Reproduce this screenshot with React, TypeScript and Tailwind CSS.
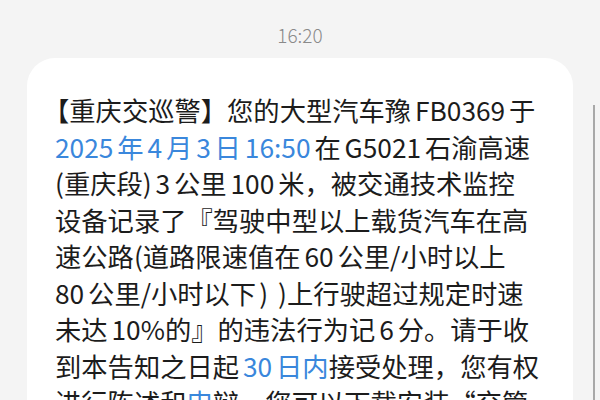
import React from 'react';

const Blue = ({ children }: { children: React.ReactNode }) => (
  <span className="text-[#3a87dc]">{children}</span>
);

export default function App() {
  const lines: React.ReactNode[] = [
    <>
      <span className="-ml-[12px]">【</span>重庆交巡警】您的大型汽车豫 FB0369 于
    </>,
    <>
      <Blue>2025 年 4 月 3 日 16:50</Blue> 在 G5021 石渝高速
    </>,
    <>(重庆段) 3 公里 100 米，被交通技术监控</>,
    <>设备记录了『驾驶中型以上载货汽车在高</>,
    <>速公路(道路限速值在 60 公里/小时以上</>,
    <>
      80 公里/小时以下<span className="ml-[3px]">)</span>
      <span className="ml-[10px]">)</span>上行驶超过规定时速
    </>,
    <>未达 10%的』的违法行为记 6 分。请于收</>,
    <>
      到本告知之日起 <Blue>30 日内</Blue>接受处理，您有权
    </>,
    <>
      进行陈述和<Blue>申</Blue>辩，您可以下载安装“交管
    </>,
  ];

  return (
    <div
      className="relative h-[400px] w-[600px] overflow-hidden bg-[#f4f4f4]"
      style={{ fontFamily: '"Noto Sans CJK SC", "Noto Sans", sans-serif' }}
    >
      <div className="pt-[24px] text-center text-[19px] leading-[22px] font-light text-[#8a8a8a]">16:20</div>

      <div className="ml-[27px] mt-[12px] h-[400px] w-[546px] rounded-[28px] bg-white pl-[28px] pt-[34px]">
        <div className="text-[26.3px] leading-[36.5px] text-[#1c1c1c] [word-spacing:-2px]">
          {lines.map((l, i) => (
            <div key={i} className="whitespace-nowrap">
              {l}
            </div>
          ))}
        </div>
      </div>

      {/* scrollbar */}
      <div className="absolute left-[593px] top-[105px] h-[300px] w-[2px] bg-[#a8a8a8]" />
    </div>
  );
}
